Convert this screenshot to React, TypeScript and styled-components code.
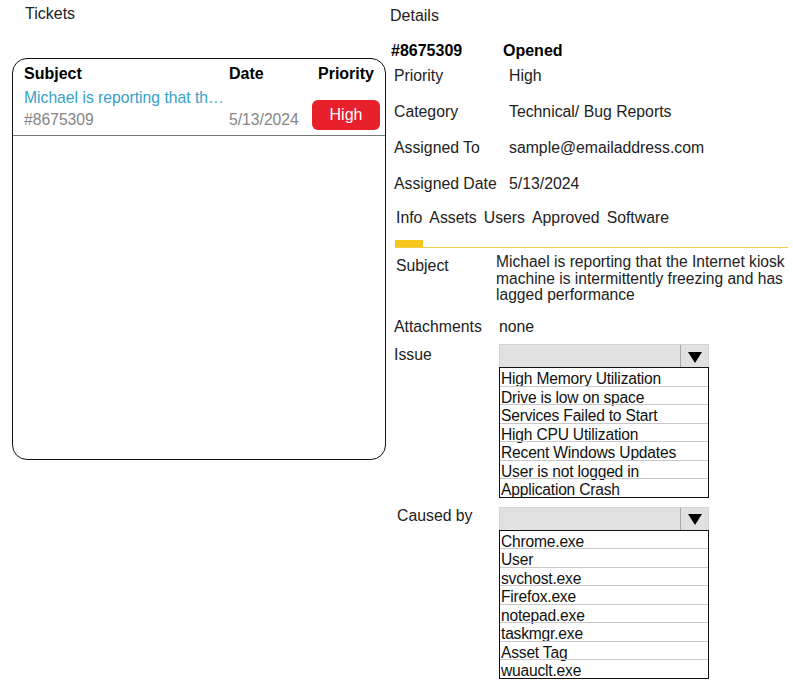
import styled, { createGlobalStyle } from 'styled-components'

const GlobalStyle = createGlobalStyle`
  body {
    margin: 0;
    background: #fff;
    font-family: "Liberation Sans", Arial, sans-serif;
    color: #111;
  }
`

const issues = [
  'High Memory Utilization',
  'Drive is low on space',
  'Services Failed to Start',
  'High CPU Utilization',
  'Recent Windows Updates',
  'User is not logged in',
  'Application Crash',
]

const causes = [
  'Chrome.exe',
  'User',
  'svchost.exe',
  'Firefox.exe',
  'notepad.exe',
  'taskmgr.exe',
  'Asset Tag',
  'wuauclt.exe',
]

const details = [
  { label: 'Priority', value: 'High' },
  { label: 'Category', value: 'Technical/ Bug Reports' },
  { label: 'Assigned To', value: 'sample@emailaddress.com' },
  { label: 'Assigned Date', value: '5/13/2024' },
]

const tabs = ['Info', 'Assets', 'Users', 'Approved', 'Software']

const Page = styled.div`
  display: flex;
  gap: 4px;
  width: 793px;
  height: 687px;
  overflow: hidden;
`

const LeftColumn = styled.div`
  width: 374px;
  padding: 5px 0 0 12px;
  display: flex;
  flex-direction: column;
`

const Title = styled.div<{ $indent: number }>`
  font-size: 16px;
  line-height: 18px;
  color: #222;
  padding-left: ${(p) => p.$indent}px;
`

const Panel = styled.div`
  margin-top: 35px;
  height: 402px;
  box-sizing: border-box;
  border: 1.3px solid #111;
  border-radius: 15px;
`

const TableGrid = styled.div`
  display: grid;
  grid-template-columns: 205px 83px 1fr;
  padding: 6px 0 0 11px;
  font-size: 16px;
  line-height: 18px;
`

const HeadCell = styled.div<{ $shift?: number }>`
  font-weight: bold;
  color: #000;
  padding-left: ${(p) => p.$shift ?? 0}px;
`

const TicketRow = styled.div`
  display: grid;
  grid-template-columns: 205px 83px 1fr;
  padding: 6px 0 6px 11px;
  border-bottom: 1px solid #777;
  font-size: 15.7px;
  align-items: end;
`

const SubjectCell = styled.div`
  display: flex;
  flex-direction: column;
  gap: 4px;
  line-height: 18px;
`

const SubjectLink = styled.span`
  color: #35a2c9;
  white-space: nowrap;
`

const Muted = styled.span`
  color: #858585;
`

const PriorityBadge = styled.div`
  align-self: end;
  justify-self: start;
  margin-bottom: -1px;
  width: 68px;
  height: 30px;
  border-radius: 6px;
  background: #e8202b;
  color: #fff;
  display: flex;
  align-items: center;
  justify-content: center;
  font-size: 16px;
`

const RightColumn = styled.div`
  flex: 1;
  padding-top: 7px;
  display: flex;
  flex-direction: column;
`

const DetailHeader = styled.div`
  margin-top: 17px;
  display: grid;
  grid-template-columns: 112px 1fr;
  padding-left: 1px;
  font-size: 16px;
  line-height: 18px;
  font-weight: bold;
  color: #000;
`

const Fields = styled.div`
  margin-top: 7px;
  display: flex;
  flex-direction: column;
  gap: 18px;
  padding-left: 4px;
`

const Field = styled.div`
  display: grid;
  grid-template-columns: 115px 1fr;
  font-size: 15.8px;
  line-height: 18px;
  color: #222;
`

const TabRow = styled.div`
  margin-top: 16px;
  display: flex;
  gap: 7px;
  padding-left: 6px;
  font-size: 15.8px;
  line-height: 18px;
  color: #222;
`

const TabTrack = styled.div`
  margin: 12px 5px 0 5px;
  height: 8px;
  border-bottom: 1px solid #f0cf4a;
  display: flex;
`

const TabIndicator = styled.div`
  width: 28px;
  height: 7px;
  margin-top: 1px;
  background: #f7c71d;
`

const InfoBody = styled.div`
  margin-top: 6px;
  display: flex;
  flex-direction: column;
  padding-left: 4px;
  font-size: 15.8px;
  color: #222;
`

const InfoRow = styled.div<{ $top?: number; $labelTop?: number }>`
  display: grid;
  grid-template-columns: 105px 1fr;
  margin-top: ${(p) => p.$top ?? 0}px;
  line-height: 18px;
  & > :first-child {
    padding-top: ${(p) => p.$labelTop ?? 0}px;
  }
`

const Paragraph = styled.div`
  width: 297px;
  font-size: 15.6px;
  line-height: 16.7px;
  margin-left: -3px;
`

const Picker = styled.div`
  width: 210px;
  display: flex;
  flex-direction: column;
`

const SelectBox = styled.div`
  height: 23px;
  box-sizing: border-box;
  background: #e1e1e1;
  border: 1px solid #d2d2d2;
  border-bottom: none;
  display: flex;
  justify-content: flex-end;
`

const ArrowCell = styled.div`
  width: 27px;
  border-left: 1px solid #a8a8a8;
  display: flex;
  align-items: center;
  justify-content: center;
  padding-top: 2px;
`

const OptionList = styled.div`
  border: 1px solid #111;
  display: flex;
  flex-direction: column;
`

const Option = styled.div`
  height: 17.5px;
  box-sizing: border-box;
  padding: 2px 0 0 1px;
  font-size: 15.6px;
  line-height: 17.5px;
  color: #111;
  letter-spacing: -0.2px;
  white-space: nowrap;
  & + & {
    border-top: 1px solid #c9c9c9;
    height: 18.5px;
  }
`

function Dropdown({ items }: { items: string[] }) {
  return (
    <Picker>
      <SelectBox>
        <ArrowCell>
          <svg width="14" height="11" viewBox="0 0 14 11">
            <polygon points="0,0 14,0 7,11" fill="#000" />
          </svg>
        </ArrowCell>
      </SelectBox>
      <OptionList>
        {items.map((item) => (
          <Option key={item}>{item}</Option>
        ))}
      </OptionList>
    </Picker>
  )
}

function App() {
  return (
    <>
      <GlobalStyle />
      <Page>
        <LeftColumn>
          <Title $indent={13}>Tickets</Title>
          <Panel>
            <TableGrid>
              <HeadCell>Subject</HeadCell>
              <HeadCell>Date</HeadCell>
              <HeadCell $shift={6}>Priority</HeadCell>
            </TableGrid>
            <TicketRow>
              <SubjectCell>
                <SubjectLink>Michael is reporting that th…</SubjectLink>
                <Muted>#8675309</Muted>
              </SubjectCell>
              <Muted>5/13/2024</Muted>
              <PriorityBadge>High</PriorityBadge>
            </TicketRow>
          </Panel>
        </LeftColumn>

        <RightColumn>
          <Title $indent={0}>Details</Title>
          <DetailHeader>
            <span>#8675309</span>
            <span>Opened</span>
          </DetailHeader>
          <Fields>
            {details.map((d) => (
              <Field key={d.label}>
                <span>{d.label}</span>
                <span>{d.value}</span>
              </Field>
            ))}
          </Fields>
          <TabRow>
            {tabs.map((t) => (
              <span key={t}>{t}</span>
            ))}
          </TabRow>
          <TabTrack>
            <TabIndicator />
          </TabTrack>
          <InfoBody>
            <InfoRow $labelTop={3}>
              <span style={{ paddingLeft: 2 }}>Subject</span>
              <Paragraph>
                Michael is reporting that the Internet kiosk machine is intermittently freezing and has lagged
                performance
              </Paragraph>
            </InfoRow>
            <InfoRow $top={14}>
              <span>Attachments</span>
              <span>none</span>
            </InfoRow>
            <InfoRow $top={8} $labelTop={2}>
              <span>Issue</span>
              <Dropdown items={issues} />
            </InfoRow>
            <InfoRow $top={9} $labelTop={-1}>
              <span style={{ paddingLeft: 3 }}>Caused by</span>
              <Dropdown items={causes} />
            </InfoRow>
          </InfoBody>
        </RightColumn>
      </Page>
    </>
  )
}

export default App
